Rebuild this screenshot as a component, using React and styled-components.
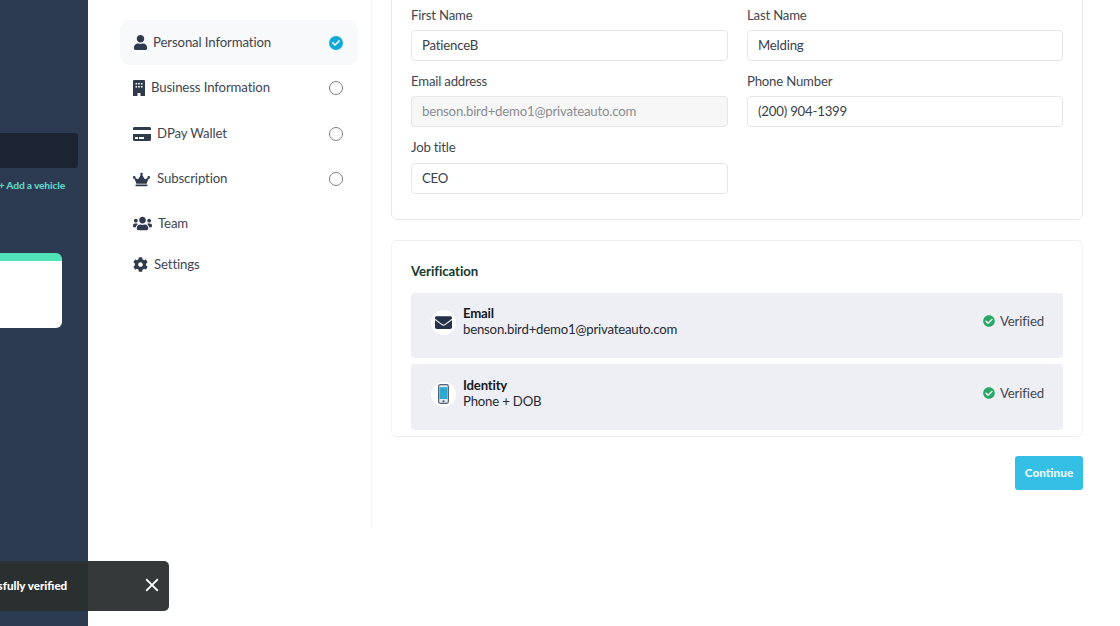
import React from "react";
import styled, { createGlobalStyle } from "styled-components";
import { FaUser, FaCreditCard, FaCrown, FaUsers, FaCog, FaCheckCircle, FaEnvelope, FaCheck } from "react-icons/fa";
import { MdClose } from "react-icons/md";

const Global = createGlobalStyle`
  html, body { margin: 0; padding: 0; background: #fff; overflow: hidden; }
  * { box-sizing: border-box; }
  body { font-family: "Lato", "Open Sans", sans-serif; color: #2f3a4c; }
`;

const Page = styled.div`
  position: relative;
  display: flex;
  width: 1120px;
  height: 626px;
  overflow: hidden;
`;

const Sidebar = styled.aside`
  width: 88px;
  flex: none;
  background: #2c3a52;
  padding-top: 133px;
  display: flex;
  flex-direction: column;
  align-items: flex-end;
`;

const DarkBar = styled.div`
  width: 78px;
  height: 35px;
  margin-right: 10px;
  background: #1c2433;
  border-radius: 0 3px 3px 0;
`;

const AddVehicle = styled.div`
  margin: 11px 23px 0 0;
  height: 12px;
  width: 65px;
  color: #5fd3c4;
  font-size: 10.2px;
  line-height: 12px;
  font-weight: 900;
  letter-spacing: -0.15px;
  white-space: nowrap;
  display: flex;
  justify-content: flex-end;
`;

const Card = styled.div`
  width: 62px;
  height: 75px;
  margin: 62px 26px 0 0;
  background: #fff;
  border-top: 8px solid #4fe3b7;
  border-radius: 0 6px 6px 0;
`;

const MenuPanel = styled.nav`
  width: 284px;
  height: 528px;
  flex: none;
  padding: 20px 13px 0 32px;
  border-right: 1px solid #f4f5f6;
  display: flex;
  flex-direction: column;
`;

const MenuItem = styled.div`
  display: flex;
  align-items: center;
  height: ${p => p.$h}px;
  width: 238px;
  padding: 0 15px 0 13px;
  border-radius: 9px;
  background: ${p => (p.$active ? "#f8f9fa" : "transparent")};
  color: #3f4650;
  font-size: 13.2px;
`;

const MenuIcon = styled.span`
  display: flex;
  width: ${p => p.$w}px;
  flex: none;
  color: #2f3a4c;
  font-size: ${p => p.$s}px;
`;

const MenuLabel = styled.span`
  flex: 1;
  position: relative;
  top: -1px;
  letter-spacing: -0.12px;
`;

const RadioCircle = styled.span`
  width: 14px;
  height: 14px;
  border-radius: 50%;
  border: 1px solid #7b7f85;
  background: #fff;
`;

const CheckedCircle = styled.span`
  width: 14px;
  height: 14px;
  border-radius: 50%;
  background: #12a9d6;
  color: #fff;
  font-size: 8px;
  display: flex;
  align-items: center;
  justify-content: center;
`;

const Content = styled.main`
  width: 692px;
  margin-left: 19px;
  flex: none;
  display: flex;
  flex-direction: column;
`;

const FormCard = styled.section`
  margin-top: -10px;
  height: 230px;
  padding: 15px 19px 0;
  border: 1px solid #e8e9eb;
  border-radius: 6px;
  display: grid;
  grid-template-columns: 317px 316px;
  grid-auto-rows: 66px;
  column-gap: 19px;
  align-content: start;
`;

const Field = styled.label`
  display: flex;
  flex-direction: column;
  color: #3f4650;
  font-size: 13.2px;
  line-height: 18px;
  letter-spacing: -0.2px;
`;

const TextInput = styled.input`
  margin-top: ${p => p.$gap}px;
  height: 31px;
  flex: none;
  width: 100%;
  padding: 0 10px 2px;
  font: inherit;
  letter-spacing: -0.2px;
  color: ${p => (p.disabled ? "#8a8d91" : "#3a4049")};
  background: ${p => (p.disabled ? "#f7f7f7" : "#fff")};
  border: 1px solid #e3e5e8;
  border-radius: 4px;
  outline: none;
`;

const VerifyCard = styled.section`
  margin-top: 20px;
  height: 197px;
  padding: 22px 19px 0;
  border: 1px solid #eceded;
  border-left-color: #f4f4f5;
  border-right-color: #f4f4f5;
  border-radius: 6px;
`;

const VerifyTitle = styled.h2`
  margin: 0 0 13px;
  font-size: 13.2px;
  line-height: 17px;
  font-weight: 700;
  color: #12392f;
  letter-spacing: -0.05px;
`;

const VerifyRow = styled.div`
  display: flex;
  align-items: center;
  height: ${p => p.$h}px;
  margin-bottom: 6px;
  padding: 0 19px ${p => p.$pad}px 20px;
  background: #eeeff4;
  border-radius: 4px;
`;

const IconDisc = styled.span`
  width: 25px;
  height: 25px;
  flex: none;
  border-radius: 50%;
  background: #fff;
  color: #26324a;
  display: flex;
  align-items: center;
  justify-content: center;
  font-size: 17px;
  margin: 2px 7px 0 0;
`;

const VerifyText = styled.div`
  flex: 1;
  font-size: 13.2px;
  line-height: 16px;
  color: #262b33;
  letter-spacing: -0.2px;
`;

const VerifyName = styled.div`
  font-weight: 700;
  color: #16191e;
`;

const Status = styled.div`
  display: flex;
  align-items: center;
  gap: 5px;
  font-size: 13.2px;
  color: #3f4650;
  letter-spacing: -0.12px;
  svg { color: #27a765; font-size: 12px; }
`;

const Actions = styled.div`
  display: flex;
  justify-content: flex-end;
  margin-top: 19px;
`;

const ContinueButton = styled.button`
  width: 68px;
  height: 34px;
  padding: 0 0 2px;
  border: none;
  border-radius: 3px;
  background: #34c0e4;
  color: #e9f8fc;
  font-family: inherit;
  font-size: 11.8px;
  font-weight: 900;
`;

const Toast = styled.div`
  position: absolute;
  left: -120px;
  top: 561px;
  width: 289px;
  height: 50px;
  display: flex;
  align-items: center;
  justify-content: space-between;
  padding: 0 6px 0 0;
  background: rgba(42, 46, 46, 0.95);
  border-radius: 5px;
  color: #fff;
  font-size: 11.6px;
  font-weight: 900;
`;

const ToastText = styled.span`
  margin-left: 43px;
  margin-top: -1px;
  white-space: nowrap;
`;

const Close = styled.span`
  display: flex;
  font-size: 22px;
  margin-top: -3px;
`;

const BuildingIcon = () => (
  <svg width="12" height="16" viewBox="0 0 12 16">
    <path
      fill="#2f3a4c"
      fillRule="evenodd"
      d="M1 0h10a1 1 0 0 1 1 1v15H7.5v-3h-3v3H0V1a1 1 0 0 1 1-1z
         M2.5 3v1.6h1.6V3z M5.2 3v1.6h1.6V3z M7.9 3v1.6h1.6V3z
         M2.5 6v1.6h1.6V6z M5.2 6v1.6h1.6V6z M7.9 6v1.6h1.6V6z"
    />
  </svg>
);

const PhoneIcon = () => (
  <svg width="11" height="20" viewBox="0 0 11 20">
    <rect x="0.6" y="0.6" width="9.8" height="18.8" rx="1.8" fill="#e4e7eb" stroke="#56637a" strokeWidth="1.2" />
    <rect x="1.5" y="3.2" width="8" height="11.8" fill="#2fa8d0" />
    <circle cx="5.5" cy="17.2" r="1" fill="#3a4658" />
  </svg>
);

const menu = [
  { label: "Personal Information", icon: <FaUser />, w: 20, s: 15, h: 45, active: true, state: "done" },
  { label: "Business Information", icon: <BuildingIcon />, w: 18, s: 15, h: 46, state: "open" },
  { label: "DPay Wallet", icon: <FaCreditCard />, w: 24, s: 18, h: 45, state: "open" },
  { label: "Subscription", icon: <FaCrown />, w: 24, s: 17, h: 46, state: "open" },
  { label: "Team", icon: <FaUsers />, w: 25, s: 19, h: 43 },
  { label: "Settings", icon: <FaCog />, w: 21, s: 15, h: 39 },
];

const fields = [
  { label: "First Name", value: "PatienceB", gap: 6 },
  { label: "Last Name", value: "Melding", gap: 6 },
  { label: "Email address", value: "benson.bird+demo1@privateauto.com", disabled: true, gap: 6 },
  { label: "Phone Number", value: "(200) 904-1399", gap: 6 },
  { label: "Job title", value: "CEO", gap: 7 },
];

const verifications = [
  { name: "Email", detail: "benson.bird+demo1@privateauto.com", icon: <FaEnvelope />, h: 65, pad: 9 },
  { name: "Identity", detail: "Phone + DOB", icon: <PhoneIcon />, h: 66, pad: 8 },
];

export default function App() {
  return (
    <Page>
      <Global />
      <Sidebar>
        <DarkBar />
        <AddVehicle>+ Add a vehicle</AddVehicle>
        <Card />
      </Sidebar>
      <MenuPanel>
        {menu.map(m => (
          <MenuItem key={m.label} $active={m.active} $h={m.h}>
            <MenuIcon $w={m.w} $s={m.s}>{m.icon}</MenuIcon>
            <MenuLabel>{m.label}</MenuLabel>
            {m.state === "done" && <CheckedCircle><FaCheck /></CheckedCircle>}
            {m.state === "open" && <RadioCircle />}
          </MenuItem>
        ))}
      </MenuPanel>
      <Content>
        <FormCard>
          {fields.map(f => (
            <Field key={f.label}>
              {f.label}
              <TextInput readOnly value={f.value} disabled={f.disabled} $gap={f.gap} />
            </Field>
          ))}
        </FormCard>
        <VerifyCard>
          <VerifyTitle>Verification</VerifyTitle>
          {verifications.map(v => (
            <VerifyRow key={v.name} $h={v.h} $pad={v.pad}>
              <IconDisc>{v.icon}</IconDisc>
              <VerifyText>
                <VerifyName>{v.name}</VerifyName>
                {v.detail}
              </VerifyText>
              <Status><FaCheckCircle />Verified</Status>
            </VerifyRow>
          ))}
        </VerifyCard>
        <Actions>
          <ContinueButton>Continue</ContinueButton>
        </Actions>
      </Content>
      <Toast>
        <ToastText>Vehicle successfully verified</ToastText>
        <Close><MdClose /></Close>
      </Toast>
    </Page>
  );
}
